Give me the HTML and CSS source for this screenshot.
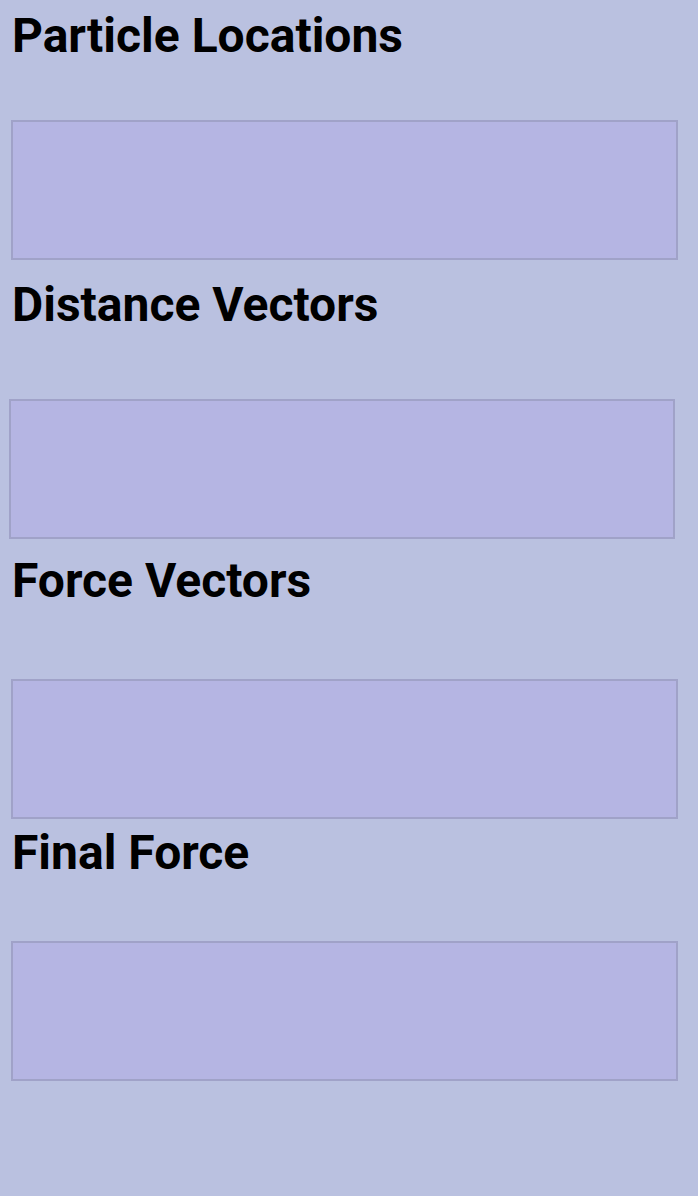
FILE: index.html
```html
<!DOCTYPE html>
<html lang="en">
<head>
<meta charset="utf-8">
<title>Particle Forces</title>
<link rel="stylesheet" href="styles.css">
</head>
<body>
<main class="page">
  <section class="panel panel-locations">
    <h2 class="panel-title">Particle Locations</h2>
    <div class="panel-box"></div>
  </section>
  <section class="panel panel-distance">
    <h2 class="panel-title">Distance Vectors</h2>
    <div class="panel-box panel-box-shifted"></div>
  </section>
  <section class="panel panel-force">
    <h2 class="panel-title">Force Vectors</h2>
    <div class="panel-box"></div>
  </section>
  <section class="panel panel-final">
    <h2 class="panel-title">Final Force</h2>
    <div class="panel-box"></div>
  </section>
</main>
</body>
</html>
```

FILE: styles.css
```css
html, body {
  margin: 0;
  padding: 0;
  background: #bac1e0;
}

body {
  font-family: Roboto, "Liberation Sans", sans-serif;
  color: #000;
  min-height: 1196px;
}

.page {
  display: flex;
  flex-direction: column;
  padding: 0 20px 0 11px;
}

.panel {
  display: flex;
  flex-direction: column;
}

.panel-title {
  margin: 0;
  padding-left: 1px;
  font-size: 48px;
  font-weight: 700;
  line-height: 56px;
  letter-spacing: 0;
}

.panel-box {
  box-sizing: border-box;
  width: 667px;
  height: 140px;
  background: #b5b5e3;
  border: 2px solid #a0a2c8;
}

.panel-box-shifted {
  width: 666px;
  margin-left: -2px;
}

.panel-locations { margin-top: 8px; }
.panel-locations .panel-box { margin-top: 56px; }

.panel-distance { margin-top: 17px; }
.panel-distance .panel-box { margin-top: 66px; }

.panel-force { margin-top: 14px; }
.panel-force .panel-box { margin-top: 70px; }

.panel-final { margin-top: 6px; }
.panel-final .panel-box { margin-top: 60px; }
```
